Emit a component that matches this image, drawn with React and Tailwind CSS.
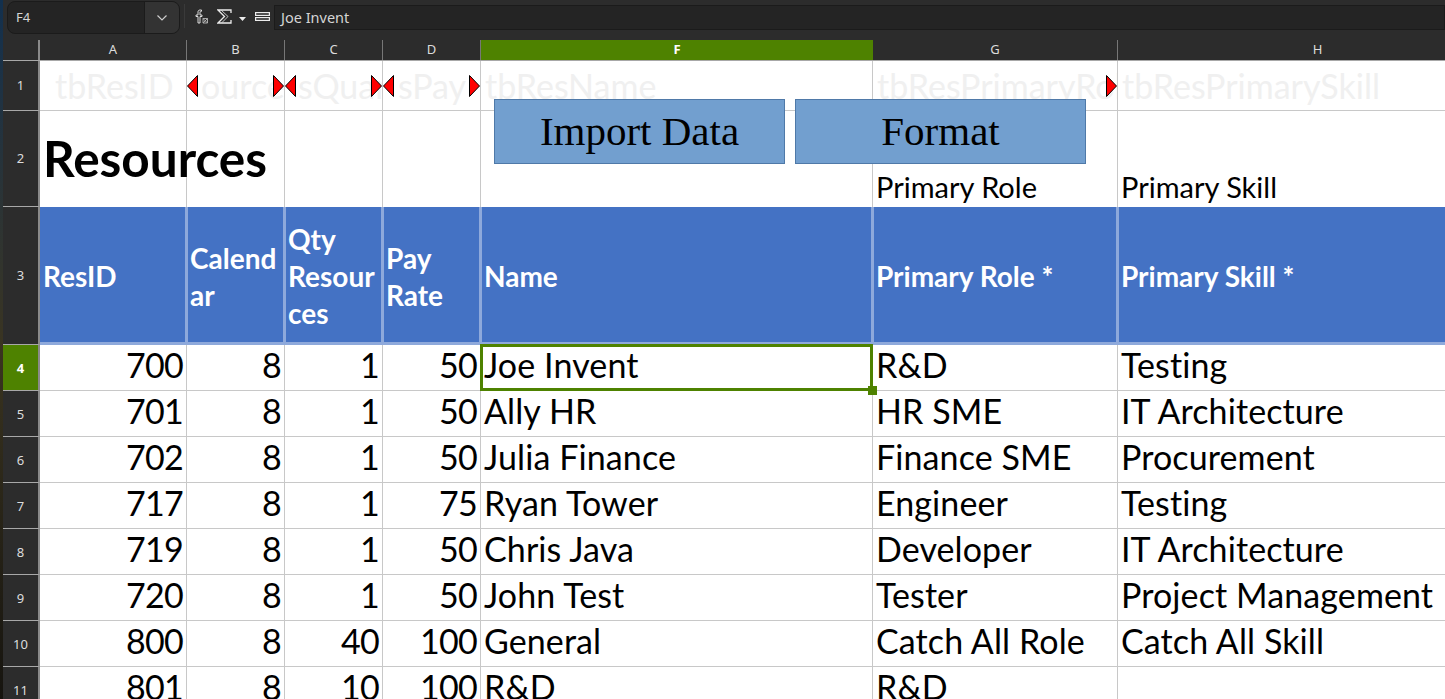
import React from "react";

const cols = [
  { k: "A", w: "w-[147px]" },
  { k: "B", w: "w-[98px]" },
  { k: "C", w: "w-[98px]" },
  { k: "D", w: "w-[98px]" },
  { k: "F", w: "w-[392px]" },
  { k: "G", w: "w-[245px]" },
  { k: "H", w: "w-[400px]" },
];

const rows = [
  [4, "700", "8", "1", "50", "Joe Invent", "R&D", "Testing"],
  [5, "701", "8", "1", "50", "Ally HR", "HR SME", "IT Architecture"],
  [6, "702", "8", "1", "50", "Julia Finance", "Finance SME", "Procurement"],
  [7, "717", "8", "1", "75", "Ryan Tower", "Engineer", "Testing"],
  [8, "719", "8", "1", "50", "Chris Java", "Developer", "IT Architecture"],
  [9, "720", "8", "1", "50", "John Test", "Tester", "Project Management"],
  [10, "800", "8", "40", "100", "General", "Catch All Role", "Catch All Skill"],
  [11, "801", "8", "10", "100", "R&D", "R&D", ""],
];

const font = "font-['Lato','Noto_Sans',sans-serif]";

const Arrow = ({ dir, className }) => (
  <svg width="11" height="22" viewBox="0 0 11 22" className={"absolute top-[14px] " + className}>
    {dir === "left" ? (
      <polygon points="10.5,0.5 10.5,21.5 0.5,11" fill="#ff0000" stroke="#000" strokeWidth="1" />
    ) : (
      <polygon points="0.5,0.5 0.5,21.5 10.5,11" fill="#ff0000" stroke="#000" strokeWidth="1" />
    )}
  </svg>
);

const RowHead = ({ children, h, active }) => (
  <div
    className={
      "w-[37px] shrink-0 flex items-center justify-center font-['Noto_Sans',sans-serif] text-[13px] tracking-normal border-r-2 border-b border-r-[#8a8a8a] border-b-[#a8a8a8] " +
      h +
      (active ? " bg-[#4e8200] text-white font-bold" : " bg-[#2c2c2c] text-[#dcdcdc] font-normal")
    }
  >
    {children}
  </div>
);

const Ghost = ({ w, children, arrows }) => (
  <div className={"relative shrink-0 h-full overflow-hidden border-r border-[#c8c8c8] " + w}>
    <span className="absolute left-[15px] top-[5px] text-[34px] leading-[40px] whitespace-nowrap text-[#f0f0f0]">
      {children}
    </span>
    {arrows}
  </div>
);

const BothArrows = () => (
  <>
    <Arrow dir="left" className="left-0" />
    <Arrow dir="right" className="right-0" />
  </>
);

export default function App() {
  return (
    <div className={"relative h-[699px] w-[1445px] overflow-hidden bg-[#2c2c2c] flex " + font}>
      {/* sliver of desktop on the left */}
      <div className="w-[3px] shrink-0 bg-gradient-to-b from-[#12304e] via-[#3a3420] to-[#16140f]" />
      <div className="flex-1 min-w-0 flex flex-col">
        {/* formula bar */}
        <div className="h-[40px] shrink-0 flex items-start font-['Noto_Sans',sans-serif] bg-[#2c2c2c]">
          <div className="ml-[4px] mt-[1px] h-[33px] w-[173px] flex rounded-[8px] border border-[#1b1b1b] bg-[#242424] overflow-hidden">
            <div className="flex-1 pl-[8px] text-[13px] leading-[31px] text-[#d5d5d5]">F4</div>
            <div className="w-[35px] flex items-center justify-center bg-[#333] border-l border-[#1b1b1b]">
              <svg width="12" height="8" viewBox="0 0 12 8" fill="none" stroke="#ccc" strokeWidth="1.2">
                <path d="M1.5 1.5 6 6l4.5-4.5" />
              </svg>
            </div>
          </div>
          <div className="ml-[4px] mt-[4px] h-[24px] w-px bg-[#3a3a3a]" />
          <svg width="15" height="16" viewBox="0 0 15 16" fill="none" stroke="#ececec" className="ml-[9px] mt-[9px]">
            <path d="M7.500 1H6C4.500 1 4 2 4 3v3H2v1.500h2V14h2V7.500h2V6H6V3c0-.5.500-.7 1.500-.7z" strokeWidth="0.9" />
            <path d="M9 9.500h4.500V14H9zM9 9.500l4.500 4.500M13.500 9.500 9 14" strokeWidth="0.9" stroke="#b8b8b8" />
          </svg>
          <svg width="15" height="15" viewBox="0 0 15 15" fill="none" stroke="#ececec" strokeWidth="1.3" className="ml-[8px] mt-[9px]">
            <path d="M14 4V1H1l6.500 6.500L1 14h13v-3" />
            <path d="M4.500 1.500 11 7.500 5 13.500" strokeWidth="0.8" />
          </svg>
          <svg width="7" height="4" viewBox="0 0 7 4" className="ml-[7px] mt-[17px]">
            <path d="M0 0h7L3.500 4z" fill="#ececec" />
          </svg>
          <svg width="15" height="9" viewBox="0 0 15 9" fill="none" stroke="#ececec" strokeWidth="1.2" className="ml-[9px] mt-[12px]">
            <rect x="0.600" y="0.600" width="13.800" height="2.800" />
            <rect x="0.600" y="5.600" width="13.800" height="2.800" />
          </svg>
          <div className="ml-[4px] mt-[5px] flex-1 h-[25px] bg-[#242424] border border-[#1b1b1b] pl-[6px] text-[14.500px] leading-[22px] text-[#d5d5d5]">
            Joe Invent
          </div>
        </div>

        {/* column headers */}
        <div className="h-[21px] shrink-0 flex border-b border-[#a8a8a8] font-['Noto_Sans',sans-serif]">
          <div className="w-[37px] shrink-0 border-r-2 border-[#8a8a8a]" />
          {cols.map((c) => (
            <div
              key={c.k}
              className={
                c.w +
                " shrink-0 flex items-center justify-center text-[13px] " +
                (c.k === "F" ? "bg-[#4e8200] text-white font-bold" : "text-[#dcdcdc] border-r border-[#777]")
              }
            >
              {c.k}
            </div>
          ))}
        </div>

        {/* row 1: hidden table column names */}
        <div className="h-[50px] shrink-0 flex bg-white">
          <RowHead h="h-[50px]">1</RowHead>
          <div className="flex-1 flex border-b border-[#c8c8c8]">
            <Ghost w="w-[147px]">tbResID</Ghost>
            <Ghost w="w-[98px]" arrows={<BothArrows />}>
              <span className="ml-[-1px]">ources</span>
            </Ghost>
            <Ghost w="w-[98px]" arrows={<BothArrows />}>
              <span className="ml-[-2px]">sQuan</span>
            </Ghost>
            <Ghost w="w-[98px]" arrows={<BothArrows />}>
              <span className="ml-[0px]">sPay</span>
            </Ghost>
            <Ghost w="w-[392px]">
              <span className="ml-[-11px]">tbResName</span>
            </Ghost>
            <Ghost w="w-[245px]" arrows={<Arrow dir="right" className="right-0" />}>
              <span className="ml-[-11px]">tbResPrimaryRole</span>
            </Ghost>
            <Ghost w="flex-1 border-r-0">
              <span className="ml-[-11px]">tbResPrimarySkill</span>
            </Ghost>
          </div>
        </div>

        {/* row 2: title */}
        <div className="h-[96px] shrink-0 flex bg-white">
          <RowHead h="h-[96px]">2</RowHead>
          <div className="w-[147px] shrink-0 border-r border-[#c8c8c8] relative">
            <span className="absolute left-[3px] top-[20px] text-[49.500px] leading-[54px] font-bold whitespace-nowrap text-black">
              Resources
            </span>
          </div>
          <div className="w-[98px] shrink-0 border-r border-[#c8c8c8]" />
          <div className="w-[98px] shrink-0 border-r border-[#c8c8c8]" />
          <div className="w-[98px] shrink-0 border-r border-[#c8c8c8]" />
          <div className="w-[392px] shrink-0 border-r border-[#c8c8c8]" />
          <div className="w-[245px] shrink-0 border-r border-[#c8c8c8] flex items-end pl-[3px] pb-[1px] text-[29px] leading-[38px] text-black">
            Primary Role
          </div>
          <div className="flex-1 flex items-end pl-[3px] pb-[1px] text-[29px] leading-[38px] text-black">
            Primary Skill
          </div>
        </div>

        {/* row 3: table header */}
        <div className="h-[138px] shrink-0 flex">
          <RowHead h="h-[138px]">3</RowHead>
          <div className="flex-1 flex bg-[#4472c4] border-b-[3px] border-[#8ea9db] text-white font-bold text-[28px] leading-[37px]">
            {[
              ["w-[148px] pl-[3px]", "ResID"],
              ["w-[98px] pl-[2px]", "Calend\nar"],
              ["w-[98px] pl-[2px]", "Qty\nResour\nces"],
              ["w-[98px] pl-[2px]", "Pay\nRate"],
              ["w-[392px] pl-[2px]", "Name"],
              ["w-[245px] pl-[2px]", "Primary Role *"],
              ["flex-1 pl-[2px]", "Primary Skill *"],
            ].map(([w, t]) => (
              <div
                key={t}
                className={w + " shrink-0 flex items-center pt-[4px] whitespace-pre-wrap overflow-hidden border-r-[3px] border-[#8ea9db] last:border-r-0"}
              >
                {t}
              </div>
            ))}
          </div>
        </div>

        {/* data rows */}
        {rows.map(([n, a, b, c, d, f, g, h]) => (
          <div key={n} className="h-[46px] shrink-0 flex bg-white text-black text-[34px] leading-[40px] tracking-[0.1px]">
            <RowHead h="h-[46px]" active={n === 4}>
              {n}
            </RowHead>
            <div className="flex-1 flex border-b border-[#c8c8c8]">
              {[
                ["w-[147px]", a],
                ["w-[98px]", b],
                ["w-[98px]", c],
                ["w-[98px]", d],
              ].map(([w, v], i) => (
                <div key={i} className={w + " shrink-0 text-right pr-[3px] tracking-[-0.700px] border-r border-[#c8c8c8]"}>
                  {v}
                </div>
              ))}
              <div className={"w-[392px] shrink-0 pl-[3px] border-r border-[#c8c8c8] relative " + (n === 4 ? "z-10" : "")}>
                {f}
                {n === 4 && (
                  <div className="absolute left-[-1px] top-[-1px] right-[-1px] bottom-[-1px] border-[3px] border-[#4e8200]">
                    <div className="absolute right-[-7px] bottom-[-7px] w-[9px] h-[9px] bg-[#4e8200]" />
                  </div>
                )}
              </div>
              <div className="w-[245px] shrink-0 pl-[3px] border-r border-[#c8c8c8] whitespace-nowrap">{g}</div>
              <div className="flex-1 pl-[3px] whitespace-nowrap">{h}</div>
            </div>
          </div>
        ))}
      </div>

      {/* shapes floating over the sheet */}
      <div className="absolute left-[494px] top-[99px] w-[291px] h-[65px] bg-[#729fcf] border border-[#4f79a8] flex items-center justify-center font-['Liberation_Serif',serif] text-[41px] text-black">
        Import Data
      </div>
      <div className="absolute left-[795px] top-[99px] w-[291px] h-[65px] bg-[#729fcf] border border-[#4f79a8] flex items-center justify-center font-['Liberation_Serif',serif] text-[41px] text-black">
        Format
      </div>
    </div>
  );
}
